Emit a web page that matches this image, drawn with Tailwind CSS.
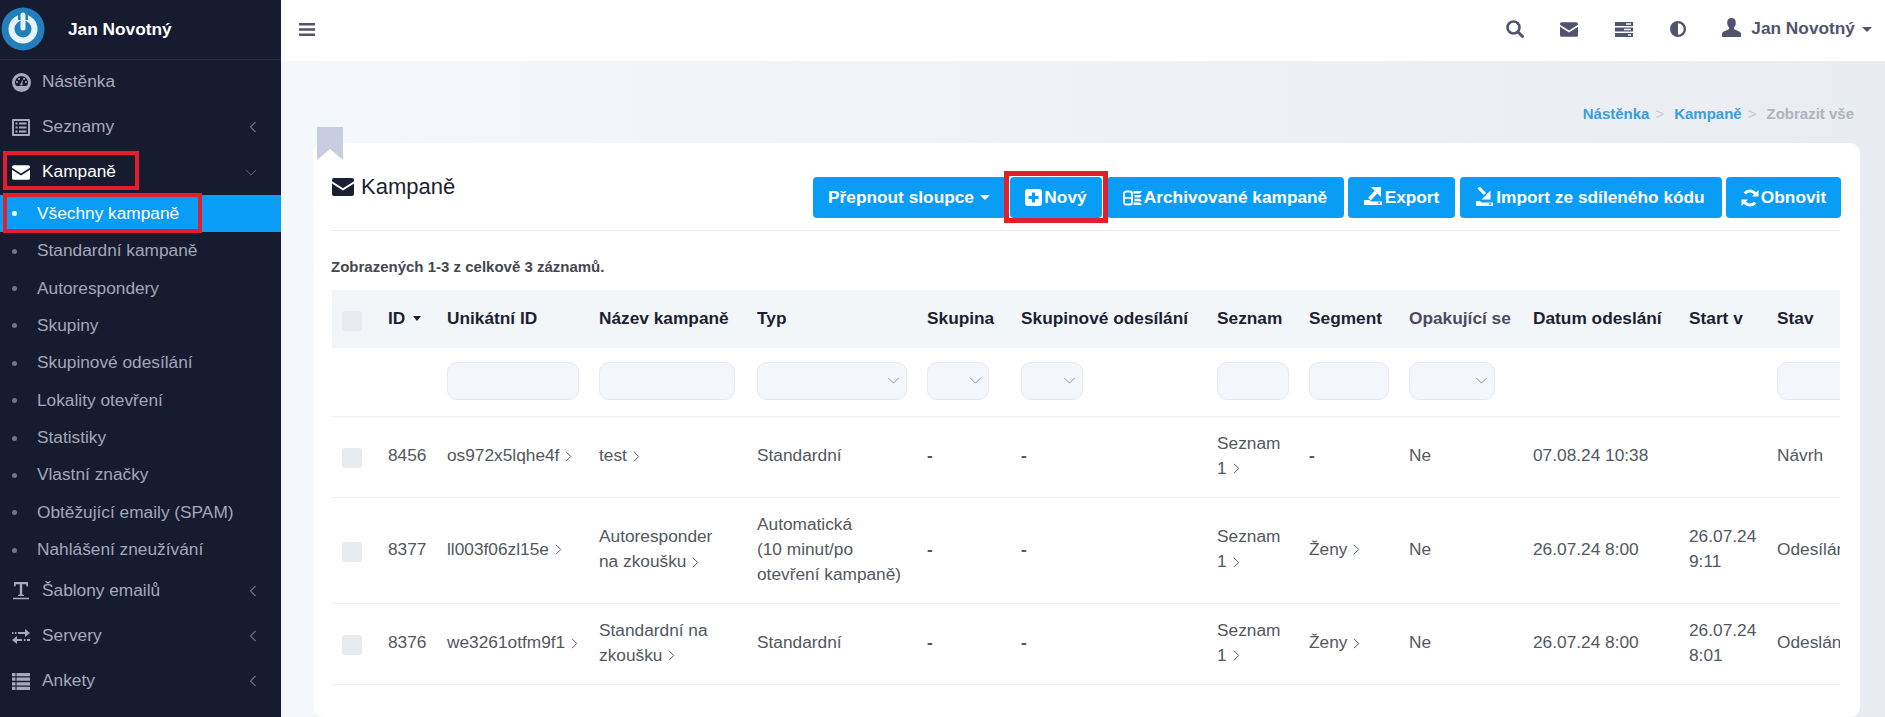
<!DOCTYPE html>
<html lang="cs">
<head>
<meta charset="UTF-8" />
<title>Kampaně</title>
<script src="https://cdn.jsdelivr.net/npm/@tailwindcss/browser@4"></script>
</head>
<body class="h-[717px] overflow-hidden flex font-['Liberation_Sans',Arial,sans-serif] text-[17.3px]">

<svg class="hidden">
  <symbol id="mail" viewBox="0 0 22 18"><path d="M2 0h18a2 2 0 0 1 2 2v1.200L11 10.200 0 3.200V2a2 2 0 0 1 2-2zM0 5.600l11 7 11-7V16a2 2 0 0 1-2 2H2a2 2 0 0 1-2-2z" fill="currentColor"/></symbol>
  <symbol id="chev-left" viewBox="0 0 8 12"><path d="M6.500 1 1.500 6l5 5" fill="none" stroke="currentColor" stroke-width="1.100"/></symbol>
  <symbol id="chev-right" viewBox="0 0 7 11"><path d="M1 .8 5.700 5.500 1 10.200" fill="none" stroke="currentColor" stroke-width="1"/></symbol>
  <symbol id="select-chev" viewBox="0 0 14 8"><path d="M1 1l6 6 6-6" fill="none" stroke="currentColor" stroke-width="0.9"/></symbol>
</svg>

<!-- sidebar -->
<aside class="relative w-[281px] shrink-0 bg-[#161b30] text-[#a7aabc]">
  <div class="h-[60px] border-b border-[#2a2e42] flex items-center">
    <svg class="ml-[1px] w-[44px] h-[44px] -mt-[2px]" viewBox="0 0 44 44">
      <circle cx="22" cy="22" r="21.5" fill="#2180bb"/>
      <circle cx="22" cy="22" r="11.500" fill="none" stroke="#e6f3fa" stroke-width="6"/>
      <path d="M22 3v10" stroke="#2180bb" stroke-width="10"/>
      <path d="M22 8v13" stroke="#e6f3fa" stroke-width="5" stroke-linecap="round"/>
    </svg>
    <span class="ml-[23px] font-bold text-white">Jan Novotný</span>
  </div>

  <a class="h-[45px] flex items-center pl-[12px] pb-[1px]">
    <svg class="w-[19px] h-[19px] text-[#a7aabc]" viewBox="0 0 19 19"><path fill="currentColor" fill-rule="evenodd" d="M9.500 0a9.500 9.500 0 1 1 0 19 9.500 9.500 0 0 1 0-19zm0 3a6.500 6.500 0 0 0-6.200 8.600c.3.8 1 1.400 1.900 1.400h8.600c.9 0 1.600-.6 1.900-1.400A6.500 6.500 0 0 0 9.500 3zM5 8a1 1 0 1 1 0 2 1 1 0 0 1 0-2zm2-3a1 1 0 1 1 0 2 1 1 0 0 1 0-2zm5 0a1 1 0 1 1 0 2 1 1 0 0 1 0-2zm2 3a1 1 0 1 1 0 2 1 1 0 0 1 0-2zM10.500 7l.5.3-.7 3.200a1.200 1.200 0 1 1-1.400-.3z"/></svg>
    <span class="ml-[11px]">Nástěnka</span>
  </a>
  <a class="h-[45px] flex items-center pl-[12px] pb-[1px]">
    <svg class="w-[18px] h-[17px]" viewBox="0 0 18 17"><path fill="currentColor" fill-rule="evenodd" d="M1 0h16a1 1 0 0 1 1 1v15a1 1 0 0 1-1 1H1a1 1 0 0 1-1-1V1a1 1 0 0 1 1-1zm1 2v13h14V2zm1.500 1.500h2v2h-2zm3.500 0h7.500v2H7zM3.500 7.500h2v2h-2zm3.500 0h7.500v2H7zM3.500 11.500h2v2h-2zm3.500 0h7.500v2H7z"/></svg>
    <span class="ml-[12px]">Seznamy</span>
    <svg class="ml-auto mr-[24px] w-[8px] h-[12px] text-[#6f7285]"><use href="#chev-left"/></svg>
  </a>
  <a class="h-[45px] flex items-center pl-[12px] pb-[1px] text-white">
    <svg class="w-[18px] h-[15px]"><use href="#mail"/></svg>
    <span class="ml-[12px]">Kampaně</span>
    <svg class="ml-auto mr-[24px] w-[12px] h-[7px] text-[#6f7285]"><use href="#select-chev"/></svg>
  </a>

  <ul class="text-[#a3a7b8]">
    <li class="h-[37.4px] flex items-center pl-[12px] bg-[#0a9df5] text-white"><span class="w-[5px] h-[5px] rounded-full bg-white"></span><span class="ml-[20px]">Všechny kampaně</span></li>
    <li class="h-[37.4px] flex items-center pl-[12px]"><span class="w-[5px] h-[5px] rounded-full bg-[#6f7588]"></span><span class="ml-[20px]">Standardní kampaně</span></li>
    <li class="h-[37.4px] flex items-center pl-[12px]"><span class="w-[5px] h-[5px] rounded-full bg-[#6f7588]"></span><span class="ml-[20px]">Autorespondery</span></li>
    <li class="h-[37.4px] flex items-center pl-[12px]"><span class="w-[5px] h-[5px] rounded-full bg-[#6f7588]"></span><span class="ml-[20px]">Skupiny</span></li>
    <li class="h-[37.4px] flex items-center pl-[12px]"><span class="w-[5px] h-[5px] rounded-full bg-[#6f7588]"></span><span class="ml-[20px]">Skupinové odesílání</span></li>
    <li class="h-[37.4px] flex items-center pl-[12px]"><span class="w-[5px] h-[5px] rounded-full bg-[#6f7588]"></span><span class="ml-[20px]">Lokality otevření</span></li>
    <li class="h-[37.4px] flex items-center pl-[12px]"><span class="w-[5px] h-[5px] rounded-full bg-[#6f7588]"></span><span class="ml-[20px]">Statistiky</span></li>
    <li class="h-[37.4px] flex items-center pl-[12px]"><span class="w-[5px] h-[5px] rounded-full bg-[#6f7588]"></span><span class="ml-[20px]">Vlastní značky</span></li>
    <li class="h-[37.4px] flex items-center pl-[12px]"><span class="w-[5px] h-[5px] rounded-full bg-[#6f7588]"></span><span class="ml-[20px]">Obtěžující emaily (SPAM)</span></li>
    <li class="h-[37.4px] flex items-center pl-[12px]"><span class="w-[5px] h-[5px] rounded-full bg-[#6f7588]"></span><span class="ml-[20px]">Nahlášení zneužívání</span></li>
  </ul>

  <a class="h-[45px] flex items-center pl-[12px]">
    <svg class="w-[18px] h-[18px]" viewBox="0 0 18 18"><path fill="currentColor" d="M2 0h14v4.500h-1.300L14 2.200H10.200V12.500l1.800.5v1H6v-1l1.800-.5V2.200H4L3.300 4.500H2zM1 15.800h16v1.400H1z"/></svg>
    <span class="ml-[12px]">Šablony emailů</span>
    <svg class="ml-auto mr-[24px] w-[8px] h-[12px] text-[#6f7285]"><use href="#chev-left"/></svg>
  </a>
  <a class="h-[45px] flex items-center pl-[12px]">
    <svg class="w-[18px] h-[15px]" viewBox="0 0 18 15"><path fill="currentColor" d="M0 3h1.500v2H0zM3 3h1.500v2H3zM6 3h7V0l5 4-5 4V5H6zM12 10h1.500v2H12zM15 10h3v2h-3zM5 7v3h5v2H5v3L0 11z"/></svg>
    <span class="ml-[12px]">Servery</span>
    <svg class="ml-auto mr-[24px] w-[8px] h-[12px] text-[#6f7285]"><use href="#chev-left"/></svg>
  </a>
  <a class="h-[45px] flex items-center pl-[12px]">
    <svg class="w-[18px] h-[17px]" viewBox="0 0 18 17"><path fill="currentColor" d="M0 0h3.500v3.200H0zM4.500 0H18v3.200H4.500zM0 4.600h3.500v3.200H0zM4.500 4.600H18v3.200H4.500zM0 9.200h3.500v3.200H0zM4.500 9.200H18v3.200H4.500zM0 13.800h3.500V17H0zM4.500 13.800H18V17H4.500z"/></svg>
    <span class="ml-[12px]">Ankety</span>
    <svg class="ml-auto mr-[24px] w-[8px] h-[12px] text-[#6f7285]"><use href="#chev-left"/></svg>
  </a>

  <!-- red annotation frames -->
  <div class="absolute left-[3px] top-[151px] w-[136px] h-[39px] border-[4px] border-[#e21f2d]"></div>
  <div class="absolute left-[3px] top-[193px] w-[199px] h-[40px] border-[4px] border-[#e21f2d]"></div>
</aside>

<div class="flex-1 min-w-0 flex flex-col bg-linear-to-r from-[#f4f7fb] to-[#e9edf1]">
  <!-- top bar -->
  <header class="h-[61px] shrink-0 bg-white flex items-center pl-[18px] pb-[3px] text-[#52536e]">
    <svg class="w-[16px] h-[13px]" viewBox="0 0 16 13"><path fill="currentColor" d="M0 0h16v2.600H0zM0 5.200h16v2.600H0zM0 10.400h16V13H0z"/></svg>
    <div class="ml-auto flex items-center">
      <svg class="w-[18px] h-[18px]" viewBox="0 0 18 18"><circle cx="7.500" cy="7.500" r="6" fill="none" stroke="currentColor" stroke-width="2.600"/><path d="M11.800 11.800 16.500 16.500" stroke="currentColor" stroke-width="3" stroke-linecap="round"/></svg>
      <svg class="ml-[36px] w-[18px] h-[15px]"><use href="#mail"/></svg>
      <svg class="ml-[37px] w-[18px] h-[15px]" viewBox="0 0 18 15"><path fill="currentColor" fill-rule="evenodd" d="M0 0h18v4H0zm11 1.200v1.500h5V1.200zM0 5.500h18v4H0zm9 1.200v1.500h7V6.700zM0 11h18v4H0zm13 1.200v1.500h3v-1.500z"/></svg>
      <svg class="ml-[37px] w-[16px] h-[16px]" viewBox="0 0 16 16"><path fill="currentColor" fill-rule="evenodd" d="M8 0a8 8 0 1 1 0 16A8 8 0 0 1 8 0zm0 2.300v11.400a5.700 5.700 0 0 0 0-11.400z"/></svg>
      <svg class="ml-[36px] w-[19px] h-[19px] -mt-[4px]" viewBox="0 0 19 19"><path fill="currentColor" d="M9.500 0c2.700 0 4.300 2 4.300 4.800 0 1.900-.8 3.600-1.800 4.500v1.500c0 .8 2 1.300 4 2.200 1.800.8 3 1.700 3 3V19H0v-3c0-1.300 1.200-2.200 3-3 2-.9 4-1.400 4-2.200V9.300C6 8.400 5.200 6.700 5.200 4.800 5.200 2 6.800 0 9.500 0z"/></svg>
      <span class="ml-[10px] font-bold -mt-[1px]">Jan Novotný</span>
      <span class="ml-[7px] mr-[13px] w-0 h-0 border-x-[5px] border-x-transparent border-t-[5px] border-t-[#52536e]"></span>
    </div>
  </header>

  <!-- breadcrumb -->
  <nav class="h-[82px] shrink-0 pt-[44px] pr-[31px] flex justify-end text-[15px] font-bold leading-[18px] text-[#3b9ddb]">
    <span>Nástěnka</span>
    <span class="ml-[6px] font-normal text-[#c6c8cf]">&gt;</span>
    <span class="ml-[10px]">Kampaně</span>
    <span class="ml-[6px] font-normal text-[#c6c8cf]">&gt;</span>
    <span class="ml-[10px] text-[#b0b3bd]">Zobrazit vše</span>
  </nav>

  <!-- card -->
  <main class="relative ml-[32px] mr-[25px] flex-1 bg-white rounded-[10px] pl-[18px] pr-[20px]">
    <svg class="absolute left-[4px] -top-[16px] w-[26px] h-[33px]" viewBox="0 0 26 33"><path fill="#c9cde0" d="M0 0h26v33L13 22 0 33z"/></svg>

    <div class="h-[88px] border-b border-[#e9ebef] flex items-start justify-between">
      <h1 class="mt-[30px] flex items-center text-[22px] leading-[28px] text-[#1c1f33]">
        <svg class="ml-[1px] w-[22px] h-[18px]"><use href="#mail"/></svg>
        <span class="ml-[7px]">Kampaně</span>
      </h1>
      <div class="mt-[34px] -mr-[1px] flex gap-[4.5px] font-bold text-white">
        <button class="w-[193px] h-[41px] rounded-[4px] bg-[#0a9df5] flex items-center justify-center">Přepnout sloupce<span class="ml-[6px] w-0 h-0 border-x-[5px] border-x-transparent border-t-[5px] border-t-white"></span></button>
        <button class="relative w-[92px] h-[41px] rounded-[4px] bg-[#0a9df5] flex items-center justify-center">
          <svg class="w-[17px] h-[17px] mr-[2px]" viewBox="0 0 17 17"><path fill="#fff" fill-rule="evenodd" d="M3 0h11a3 3 0 0 1 3 3v11a3 3 0 0 1-3 3H3a3 3 0 0 1-3-3V3a3 3 0 0 1 3-3zm4 3.500V7H3.500v3H7v3.500h3V10h3.500V7H10V3.500z"/></svg>Nový
          <span class="absolute -left-[6px] -right-[6px] -top-[6px] -bottom-[5px] border-[5px] border-[#e21f2d]"></span>
        </button>
        <button class="w-[237px] h-[41px] rounded-[4px] bg-[#0a9df5] flex items-center justify-center">
          <svg class="w-[19px] h-[16px] mr-[2px]" viewBox="0 0 19 16"><rect x="1" y="1.500" width="8" height="13" rx="2" fill="none" stroke="#fff" stroke-width="1.800"/><path d="M1 8h8" stroke="#fff" stroke-width="1.600"/><path fill="#fff" d="M10.500 1H19l-2 2.400h-6.500zM11.500 5H19l-2 2.400h-5.500zM11.500 8.800H17l2 2.400h-7.500zM10.500 12.600H17l2 2.400h-8.500z"/></svg>Archivované kampaně
        </button>
        <button class="w-[107px] h-[41px] rounded-[4px] bg-[#0a9df5] flex items-center justify-center">
          <svg class="w-[18px] h-[18px] mr-[3px] -mt-[3px]" viewBox="0 0 18 18"><path fill="#fff" d="M7 0h10v10zM0 13h5.500l2 1.500H18V18H0z"/><path d="M12 5 5.500 12" stroke="#fff" stroke-width="4"/><circle cx="15" cy="16" r="1" fill="#0a9df5"/></svg>Export
        </button>
        <button class="w-[262px] h-[41px] rounded-[4px] bg-[#0a9df5] flex items-center justify-center">
          <svg class="w-[17px] h-[19px] mr-[3px] -mt-[3px]" viewBox="0 0 17 19"><path d="M2.500.5 9 7" stroke="#fff" stroke-width="3"/><path fill="#fff" d="M14.500 3.500v9h-9zM0 14h4l1.500 1.500H17V19H0z"/><circle cx="14" cy="17" r="1" fill="#0a9df5"/></svg>Import ze sdíleného kódu
        </button>
        <button class="w-[115px] h-[41px] rounded-[4px] bg-[#0a9df5] flex items-center justify-center">
          <svg class="w-[18px] h-[18px] mr-[2px]" viewBox="0 0 18 18"><path fill="none" stroke="#fff" stroke-width="2.800" d="M15.300 6.500A6.700 6.700 0 0 0 3.800 4.500M2.700 11.500a6.700 6.700 0 0 0 11.500 2"/><path fill="#fff" d="M17.500 1v6.500H11zM.5 17v-6.500H7z"/></svg>Obnovit
        </button>
      </div>
    </div>

    <p class="mt-[27px] mb-[14px] text-[15px] leading-[18px] font-bold text-[#45474f]">Zobrazených 1-3 z celkově 3 záznamů.</p>

    <div class="overflow-hidden ml-[1px]">
      <table class="table-fixed w-[1630px] border-collapse text-left leading-[25px] text-[#53575e] [&_td]:pb-[2px] [&_th]:pb-[2px]">
        <colgroup>
          <col class="w-[46px]"/><col class="w-[59px]"/><col class="w-[152px]"/><col class="w-[158px]"/><col class="w-[170px]"/><col class="w-[94px]"/><col class="w-[196px]"/><col class="w-[92px]"/><col class="w-[100px]"/><col class="w-[124px]"/><col class="w-[156px]"/><col class="w-[88px]"/><col class="w-[195px]"/>
        </colgroup>
        <thead>
          <tr class="h-[58px] bg-[#f3f6f9] text-[#1c1f33] font-bold">
            <th class="px-[10px] pt-[5px]"><span class="block w-[20px] h-[20px] rounded-[3px] bg-[#e8ecf0]"></span></th>
            <th class="px-[10px] whitespace-nowrap">ID<span class="inline-block align-middle ml-[8px] w-0 h-0 border-x-[4.5px] border-x-transparent border-t-[5px] border-t-[#1c1f33]"></span></th>
            <th class="px-[10px] whitespace-nowrap">Unikátní ID</th>
            <th class="px-[10px] whitespace-nowrap">Název kampaně</th>
            <th class="px-[10px]">Typ</th>
            <th class="px-[10px]">Skupina</th>
            <th class="px-[10px] whitespace-nowrap">Skupinové odesílání</th>
            <th class="px-[10px]">Seznam</th>
            <th class="px-[10px]">Segment</th>
            <th class="px-[10px] whitespace-nowrap text-[#4d4a63]">Opakující se</th>
            <th class="px-[10px] whitespace-nowrap">Datum odeslání</th>
            <th class="px-[10px] whitespace-nowrap">Start v</th>
            <th class="px-[10px]">Stav</th>
          </tr>
        </thead>
        <tbody>
          <tr class="h-[68px] border-b border-[#eceef1]">
            <td></td><td></td>
            <td class="px-[10px]"><input class="block w-[132px] h-[38px] rounded-[10px] border border-[#e6e9ee] bg-[#f3f6fa]"/></td>
            <td class="pl-[10px]"><input class="block w-[136px] h-[38px] rounded-[10px] border border-[#e6e9ee] bg-[#f3f6fa]"/></td>
            <td class="px-[10px]"><div class="w-[150px] h-[38px] rounded-[10px] border border-[#e6e9ee] bg-[#f3f6fa] flex items-center justify-end pr-[6px] text-[#7d808a]"><svg class="w-[13px] h-[7px]"><use href="#select-chev"/></svg></div></td>
            <td class="px-[10px]"><div class="w-[62px] h-[38px] rounded-[10px] border border-[#e6e9ee] bg-[#f3f6fa] flex items-center justify-end pr-[6px] text-[#7d808a]"><svg class="w-[13px] h-[7px]"><use href="#select-chev"/></svg></div></td>
            <td class="px-[10px]"><div class="w-[62px] h-[38px] rounded-[10px] border border-[#e6e9ee] bg-[#f3f6fa] flex items-center justify-end pr-[6px] text-[#7d808a]"><svg class="w-[13px] h-[7px]"><use href="#select-chev"/></svg></div></td>
            <td class="px-[10px]"><input class="block w-[72px] h-[38px] rounded-[10px] border border-[#e6e9ee] bg-[#f3f6fa]"/></td>
            <td class="px-[10px]"><input class="block w-[80px] h-[38px] rounded-[10px] border border-[#e6e9ee] bg-[#f3f6fa]"/></td>
            <td class="px-[10px]"><div class="w-[86px] h-[38px] rounded-[10px] border border-[#e6e9ee] bg-[#f3f6fa] flex items-center justify-end pr-[6px] text-[#7d808a]"><svg class="w-[13px] h-[7px]"><use href="#select-chev"/></svg></div></td>
            <td></td><td></td>
            <td class="px-[10px]"><input class="block w-[132px] h-[38px] rounded-[10px] border border-[#e6e9ee] bg-[#f3f6fa]"/></td>
          </tr>
          <tr class="h-[81px] border-b border-[#eceef1]">
            <td class="px-[10px] pt-[5px]"><span class="block w-[20px] h-[20px] rounded-[3px] bg-[#e8ecf0]"></span></td>
            <td class="px-[10px]">8456</td>
            <td class="px-[10px] whitespace-nowrap">os972x5lqhe4f<svg class="inline-block ml-[6px] w-[7px] h-[11px]"><use href="#chev-right"/></svg></td>
            <td class="px-[10px]">test<svg class="inline-block ml-[6px] w-[7px] h-[11px]"><use href="#chev-right"/></svg></td>
            <td class="px-[10px]">Standardní</td>
            <td class="px-[10px] font-bold">-</td>
            <td class="px-[10px] font-bold">-</td>
            <td class="px-[10px]">Seznam 1<svg class="inline-block ml-[6px] w-[7px] h-[11px]"><use href="#chev-right"/></svg></td>
            <td class="px-[10px] font-bold">-</td>
            <td class="px-[10px]">Ne</td>
            <td class="px-[10px] whitespace-nowrap">07.08.24 10:38</td>
            <td class="px-[10px]"></td>
            <td class="px-[10px]">Návrh</td>
          </tr>
          <tr class="h-[106px] border-b border-[#eceef1]">
            <td class="px-[10px] pt-[5px]"><span class="block w-[20px] h-[20px] rounded-[3px] bg-[#e8ecf0]"></span></td>
            <td class="px-[10px]">8377</td>
            <td class="px-[10px] whitespace-nowrap">ll003f06zl15e<svg class="inline-block ml-[6px] w-[7px] h-[11px]"><use href="#chev-right"/></svg></td>
            <td class="pl-[10px] pr-[20px]">Autoresponder na zkoušku<svg class="inline-block ml-[6px] w-[7px] h-[11px]"><use href="#chev-right"/></svg></td>
            <td class="px-[10px]">Automatická<br/>(10 minut/po<br/>otevření kampaně)</td>
            <td class="px-[10px] font-bold">-</td>
            <td class="px-[10px] font-bold">-</td>
            <td class="px-[10px]">Seznam 1<svg class="inline-block ml-[6px] w-[7px] h-[11px]"><use href="#chev-right"/></svg></td>
            <td class="px-[10px]">Ženy<svg class="inline-block ml-[6px] w-[7px] h-[11px]"><use href="#chev-right"/></svg></td>
            <td class="px-[10px]">Ne</td>
            <td class="px-[10px] whitespace-nowrap">26.07.24 8:00</td>
            <td class="px-[10px]">26.07.24 9:11</td>
            <td class="px-[10px]">Odesílání</td>
          </tr>
          <tr class="h-[81px] border-b border-[#eceef1]">
            <td class="px-[10px] pt-[5px]"><span class="block w-[20px] h-[20px] rounded-[3px] bg-[#e8ecf0]"></span></td>
            <td class="px-[10px]">8376</td>
            <td class="px-[10px] whitespace-nowrap">we3261otfm9f1<svg class="inline-block ml-[6px] w-[7px] h-[11px]"><use href="#chev-right"/></svg></td>
            <td class="pl-[10px] pr-[20px]">Standardní na zkoušku<svg class="inline-block ml-[6px] w-[7px] h-[11px]"><use href="#chev-right"/></svg></td>
            <td class="px-[10px]">Standardní</td>
            <td class="px-[10px] font-bold">-</td>
            <td class="px-[10px] font-bold">-</td>
            <td class="px-[10px]">Seznam 1<svg class="inline-block ml-[6px] w-[7px] h-[11px]"><use href="#chev-right"/></svg></td>
            <td class="px-[10px]">Ženy<svg class="inline-block ml-[6px] w-[7px] h-[11px]"><use href="#chev-right"/></svg></td>
            <td class="px-[10px]">Ne</td>
            <td class="px-[10px] whitespace-nowrap">26.07.24 8:00</td>
            <td class="px-[10px]">26.07.24 8:01</td>
            <td class="px-[10px]">Odesláno</td>
          </tr>
        </tbody>
      </table>
    </div>
  </main>
</div>
</body>
</html>
